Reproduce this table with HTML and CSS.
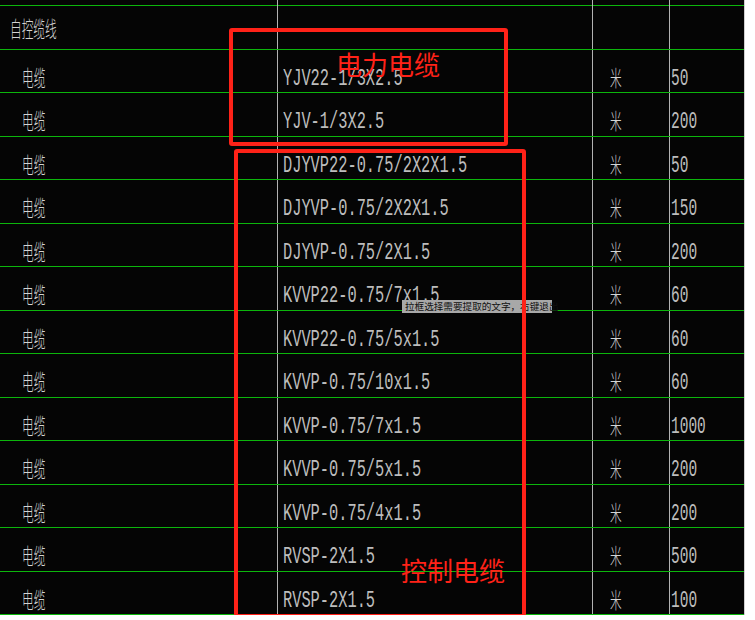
FILE: index.html
```html
<!DOCTYPE html>
<html lang="zh-CN">
<head>
<meta charset="utf-8">
<title>自控缆线</title>
<link rel="stylesheet" href="styles.css">
</head>
<body>
<div class="sheet">
  <div class="row spacer"><div class="c c1"></div><div class="c c2"></div><div class="c c3"></div><div class="c c4"></div></div>
  <div class="row head"><div class="c c1"><span class="cn">自控缆线</span></div><div class="c c2"></div><div class="c c3"></div><div class="c c4"></div></div>
  <div class="row"><div class="c c1"><span class="cn">电缆</span></div><div class="c c2"><span class="en">YJV22-1/3X2.5</span></div><div class="c c3"><span class="cn">米</span></div><div class="c c4"><span class="en num">50</span></div></div>
  <div class="row"><div class="c c1"><span class="cn">电缆</span></div><div class="c c2"><span class="en">YJV-1/3X2.5</span></div><div class="c c3"><span class="cn">米</span></div><div class="c c4"><span class="en num">200</span></div></div>
  <div class="row"><div class="c c1"><span class="cn">电缆</span></div><div class="c c2"><span class="en">DJYVP22-0.75/2X2X1.5</span></div><div class="c c3"><span class="cn">米</span></div><div class="c c4"><span class="en num">50</span></div></div>
  <div class="row"><div class="c c1"><span class="cn">电缆</span></div><div class="c c2"><span class="en">DJYVP-0.75/2X2X1.5</span></div><div class="c c3"><span class="cn">米</span></div><div class="c c4"><span class="en num">150</span></div></div>
  <div class="row"><div class="c c1"><span class="cn">电缆</span></div><div class="c c2"><span class="en">DJYVP-0.75/2X1.5</span></div><div class="c c3"><span class="cn">米</span></div><div class="c c4"><span class="en num">200</span></div></div>
  <div class="row"><div class="c c1"><span class="cn">电缆</span></div><div class="c c2"><span class="en">KVVP22-0.75/7x1.5</span></div><div class="c c3"><span class="cn">米</span></div><div class="c c4"><span class="en num">60</span></div></div>
  <div class="row"><div class="c c1"><span class="cn">电缆</span></div><div class="c c2"><span class="en">KVVP22-0.75/5x1.5</span></div><div class="c c3"><span class="cn">米</span></div><div class="c c4"><span class="en num">60</span></div></div>
  <div class="row"><div class="c c1"><span class="cn">电缆</span></div><div class="c c2"><span class="en">KVVP-0.75/10x1.5</span></div><div class="c c3"><span class="cn">米</span></div><div class="c c4"><span class="en num">60</span></div></div>
  <div class="row"><div class="c c1"><span class="cn">电缆</span></div><div class="c c2"><span class="en">KVVP-0.75/7x1.5</span></div><div class="c c3"><span class="cn">米</span></div><div class="c c4"><span class="en num">1000</span></div></div>
  <div class="row"><div class="c c1"><span class="cn">电缆</span></div><div class="c c2"><span class="en">KVVP-0.75/5x1.5</span></div><div class="c c3"><span class="cn">米</span></div><div class="c c4"><span class="en num">200</span></div></div>
  <div class="row"><div class="c c1"><span class="cn">电缆</span></div><div class="c c2"><span class="en">KVVP-0.75/4x1.5</span></div><div class="c c3"><span class="cn">米</span></div><div class="c c4"><span class="en num">200</span></div></div>
  <div class="row"><div class="c c1"><span class="cn">电缆</span></div><div class="c c2"><span class="en">RVSP-2X1.5</span></div><div class="c c3"><span class="cn">米</span></div><div class="c c4"><span class="en num">500</span></div></div>
  <div class="row last"><div class="c c1"><span class="cn">电缆</span></div><div class="c c2"><span class="en">RVSP-2X1.5</span></div><div class="c c3"><span class="cn">米</span></div><div class="c c4"><span class="en num">100</span></div></div>

  <div class="tip">拉框选择需要提取的文字，右键退出</div>
  <div class="mark mark-power"></div>
  <div class="mark mark-control"></div>
  <div class="label label-power">电力电缆</div>
  <div class="label label-control">控制电缆</div>
</div>
</body>
</html>
```
FILE: styles.css
```css
* { box-sizing: border-box; }
html, body { margin: 0; padding: 0; background: #ffffff; }

.sheet {
  position: relative;
  width: 745px;
  background: #050505;
  border-right: 1px solid #cfcfcf;
}

.row {
  display: grid;
  grid-template-columns: 277px 315px 77px 75px;
  height: 43.5px;
  border-top: 1px solid #0cb60c;
}
.row.spacer { height: 5px; border-top: 0; }
.row.last { height: 44.5px; border-bottom: 1px solid #0cb60c; }

.c { overflow: visible; white-space: nowrap; padding-top: 15px; }
.c2, .c3, .c4 { border-left: 1px solid #b2b2b2; }
.c1 { padding-left: 22px; }
.head .c1 { padding-left: 10px; padding-top: 10px; }
.c2 { padding-left: 5px; }
.c3 { padding-left: 17px; }
.c4 { padding-left: 1px; }

.cn {
  display: inline-block;
  font-family: "Noto Sans CJK SC", sans-serif;
  font-weight: 300;
  font-size: 22px;
  line-height: 22px;
  color: #d4d4d4;
  transform: scaleX(0.53);
  transform-origin: left top;
}

.en {
  display: inline-block;
  font-family: "Liberation Mono", monospace;
  font-size: 23px;
  line-height: 23px;
  color: #bdbdbd;
  margin-top: 3px;
  transform: scaleX(0.667);
  transform-origin: left top;
}
.en.num { transform: scaleX(0.63); }

.tip {
  position: absolute;
  left: 402px;
  top: 300px;
  width: 150px;
  height: 13px;
  padding-left: 3px;
  background: #a8a8a8;
  color: #101010;
  font-family: "Noto Sans CJK SC", sans-serif;
  font-size: 9.6px;
  line-height: 13px;
  white-space: nowrap;
}

.mark {
  position: absolute;
  border: 4.5px solid #ff2218;
  border-radius: 3px;
}
.mark-power { left: 229px; top: 28px; width: 279px; height: 118px; }
.mark-control { left: 234px; top: 149px; width: 292px; height: 469px; }

.label {
  position: absolute;
  font-family: "Noto Sans CJK SC", sans-serif;
  font-size: 26px;
  line-height: 26px;
  color: #ff2218;
  white-space: nowrap;
}
.label-power { left: 336px; top: 51px; }
.label-control { left: 401px; top: 557px; }
```
